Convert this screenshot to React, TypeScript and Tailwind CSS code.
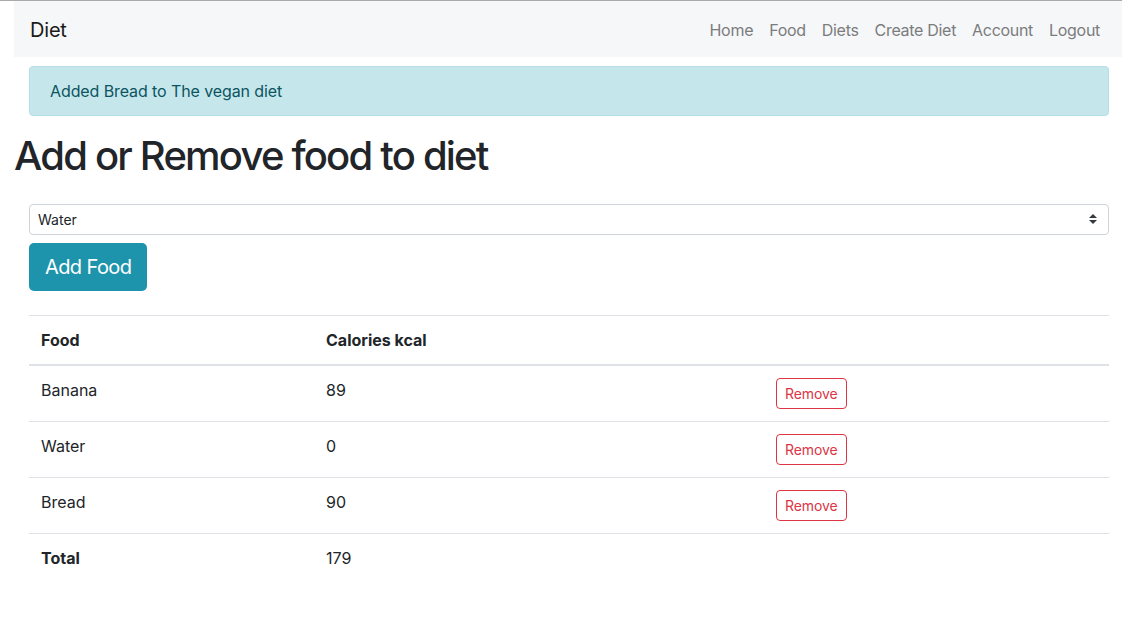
import React from "react";

const foods = [
  { name: "Banana", kcal: 89 },
  { name: "Water", kcal: 0 },
  { name: "Bread", kcal: 90 },
];

const links = ["Home", "Food", "Diets", "Create Diet", "Account", "Logout"];

export default function App() {
  const total = foods.reduce((sum, f) => sum + f.kcal, 0);

  return (
    <div className="w-full min-h-screen overflow-hidden bg-white border-t border-[#a9a9a9] text-[#212529] font-['Inter','Noto_Sans',sans-serif] text-base leading-6">
      <div className="w-[1110px] ml-[14px]">
        {/* Navbar */}
        <nav className="h-[56px] bg-[#f6f7f9] flex items-center justify-between px-4 pt-px">
          <span className="text-[20px] leading-[30px] text-[#1a1a1a] tracking-[-0.2px]">Diet</span>
          <ul className="flex items-center tracking-[-0.3px]">
            {links.map((l) => (
              <li key={l} className="px-2 text-[#7b7c7d]">
                {l}
              </li>
            ))}
          </ul>
        </nav>

        {/* Alert */}
        <div className="mx-[15px] mt-[9px] rounded border border-[#b5dfe5] bg-[#c5e7ec] px-5 py-3 text-[#0c5460] tracking-[-0.1px]">
          Added Bread to The vegan diet
        </div>

        <h1 className="mt-4 text-[40px] leading-[48px] font-medium tracking-[-1.8px]">
          Add or Remove food to diet
        </h1>

        <div className="mx-[15px] mt-6">
          <div className="relative">
            <select className="w-full h-[31px] appearance-none rounded border border-[#ced4da] bg-white pl-2 pr-7 text-[14px] text-[#212529] outline-none">
              <option>Water</option>
              <option>Banana</option>
              <option>Bread</option>
            </select>
            <svg
              className="absolute right-[12px] top-[10px] pointer-events-none"
              width="8"
              height="10"
              viewBox="0 0 4 5"
            >
              <path d="M2 0L0 2h4zm0 5L0 3h4z" fill="#343a40" />
            </svg>
          </div>

          <button className="mt-2 h-[48px] rounded-[5px] bg-[#1d94ab] px-4 text-[20px] leading-[30px] text-white tracking-[-0.6px]">
            Add Food
          </button>

          {/* Table */}
          <table className="mt-6 w-full border-collapse text-left">
            <thead>
              <tr className="border-t border-[#dee2e6]">
                <th className="w-[285px] p-3 font-bold border-b-2 border-[#dee2e6]">Food</th>
                <th className="w-[450px] p-3 font-bold border-b-2 border-[#dee2e6]">Calories kcal</th>
                <th className="p-3 border-b-2 border-[#dee2e6]"></th>
              </tr>
            </thead>
            <tbody>
              {foods.map((f) => (
                <tr key={f.name} className="border-t border-[#dee2e6] align-top">
                  <td className="p-3">{f.name}</td>
                  <td className="p-3">{f.kcal}</td>
                  <td className="p-3">
                    <button className="h-[31px] rounded border border-[#dc3545] px-2 text-[14px] leading-[21px] text-[#dc3545] tracking-[-0.1px]">
                      Remove
                    </button>
                  </td>
                </tr>
              ))}
              <tr className="border-t border-[#dee2e6] align-top">
                <td className="p-3 font-bold">Total</td>
                <td className="p-3">{total}</td>
                <td className="p-3"></td>
              </tr>
            </tbody>
          </table>
        </div>
      </div>
    </div>
  );
}
